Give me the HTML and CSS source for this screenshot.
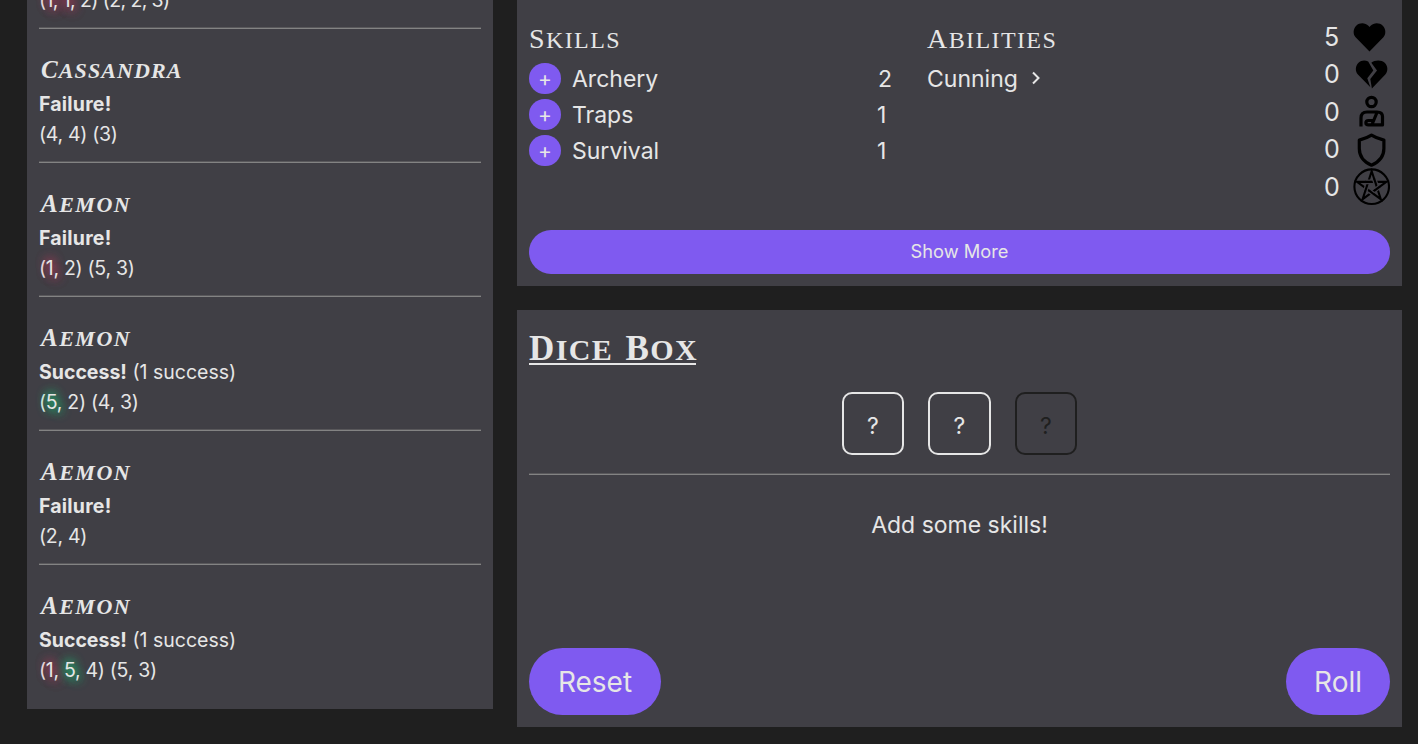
FILE: index.html
```html
<!DOCTYPE html>
<html lang="en">
<head>
<meta charset="utf-8">
<title>Dice Box</title>
<link rel="stylesheet" href="styles.css">
</head>
<body>
<main class="layout">
  <section class="panel log">
    <article class="entry">
      <p class="rolls tight">(<span class="bad">1,</span> <span class="bad">1,</span> 2) (2, 2, 3)</p>
    </article>
    <hr>
    <article class="entry">
      <h3 class="name name-long">Cassandra</h3>
      <p class="result"><b class="fail">Failure!</b></p>
      <p class="rolls">(4, 4) (3)</p>
    </article>
    <hr>
    <article class="entry">
      <h3 class="name">Aemon</h3>
      <p class="result"><b class="fail">Failure!</b></p>
      <p class="rolls">(<span class="bad">1,</span> 2) (5, 3)</p>
    </article>
    <hr>
    <article class="entry">
      <h3 class="name">Aemon</h3>
      <p class="result"><b>Success!</b> (1 success)</p>
      <p class="rolls">(<span class="good">5,</span> 2) (4, 3)</p>
    </article>
    <hr>
    <article class="entry">
      <h3 class="name">Aemon</h3>
      <p class="result"><b class="fail">Failure!</b></p>
      <p class="rolls">(2, 4)</p>
    </article>
    <hr>
    <article class="entry">
      <h3 class="name">Aemon</h3>
      <p class="result"><b>Success!</b> (1 success)</p>
      <p class="rolls">(<span class="bad">1,</span> <span class="good">5,</span> 4) (5, 3)</p>
    </article>
  </section>

  <div class="column">
    <section class="panel sheet">
      <div class="sheet-grid">
        <div class="skills">
          <h2 class="heading">Skills</h2>
          <ul class="list">
            <li class="skill"><button class="add">+</button><span class="label">Archery</span><span class="value">2</span></li>
            <li class="skill"><button class="add">+</button><span class="label">Traps</span><span class="value one">1</span></li>
            <li class="skill"><button class="add">+</button><span class="label">Survival</span><span class="value one">1</span></li>
          </ul>
        </div>
        <div class="abilities">
          <h2 class="heading">Abilities</h2>
          <div class="ability"><span class="label">Cunning</span>
            <svg class="chevron" viewBox="0 0 10 14"><path d="M2 1.500 7.500 7 2 12.500"/></svg>
          </div>
        </div>
        <ul class="stats">
          <li class="stat"><span>5</span>
            <svg class="icon" viewBox="0 0 37.500 37.500"><path d="M18.500 33.500 4.600 19.300C1.800 16.300 2 10.700 5.200 7.700 8.700 4.400 14.200 4.500 17.400 7.800L18.500 8.900 19.600 7.800C22.800 4.500 28.300 4.400 31.800 7.700 35 10.700 35.200 16.300 32.400 19.300Z"/></svg></li>
          <li class="stat"><span>0</span>
            <svg class="icon" viewBox="0 0 37.500 37.500"><path d="M15.200 5.600C12 3.700 8.200 4.200 5.500 6.700 2.200 9.800 2 15.300 4.900 18.500L17.400 31.200 14.300 22.200 20.300 14.600Z"/><path d="M18.300 6.800C21.700 3.700 28.500 3.600 31.700 6.700 35 9.800 35.300 15.300 32.300 18.500L18.900 32.600 17.300 23 24 14.600Z"/></svg></li>
          <li class="stat"><span>0</span>
            <svg class="icon line" viewBox="0 0 37.500 37.500"><circle cx="18.500" cy="9" r="4.700"/><path d="M8 33.500V25C8 21 10.500 19 14 19H24C28 19 29.500 20.800 29.500 23.500V31.900H15.500C12 31.900 12 27.500 15.500 27.500H21M24 19.500 19.200 31"/></svg></li>
          <li class="stat"><span>0</span>
            <svg class="icon line" viewBox="0 0 37.500 37.500"><path d="M18.500 4.200C14.500 6.800 10.500 8.100 6.300 9.100V17.500C6.300 25.500 11 31 18.500 34.200 26 31 30.900 25.500 30.900 17.500V9.100C26.500 8.100 22.500 6.800 18.500 4.200Z"/></svg></li>
          <li class="stat"><span>0</span>
            <svg class="icon star" viewBox="0 0 37.500 37.500"><circle cx="18.700" cy="18.700" r="17.300"/><path d="M18.700 3.200 27.800 31.200 4 13.900H33.400L9.600 31.200Z"/><path class="gap" d="M21.400 11.500 23 16.300M26.300 19 22.300 22M16.700 23.100 20.700 26.100M13.900 18.100 12.300 22.900M12.700 13.900H17.700"/><path d="M21.200 10.900 23.200 16.900M26.800 18.600 21.800 22.400M16.200 22.700 21.200 26.500M14.100 17.500 12.100 23.500M12.100 13.900H18.300"/></svg></li>
        </ul>
      </div>
      <button class="btn more">Show More</button>
    </section>

    <section class="panel dicebox">
      <h1 class="title"><span>Dice</span> <span>Box</span></h1>
      <div class="dice">
        <div class="die">?</div>
        <div class="die">?</div>
        <div class="die off">?</div>
      </div>
      <hr>
      <p class="hint">Add some skills!</p>
      <div class="actions">
        <button class="btn big reset">Reset</button>
        <button class="btn big roll">Roll</button>
      </div>
    </section>
  </div>
</main>
</body>
</html>
```
FILE: styles.css
```css
* { box-sizing: border-box; }
body {
  margin: 0;
  height: 744px;
  overflow: hidden;
  background: #1f1f1f;
  color: #e6e6e6;
  font-family: Inter, "Liberation Sans", sans-serif;
  font-size: 23px;
}
h1, h2, h3, p, ul { margin: 0; padding: 0; }
ul { list-style: none; }
button { border: 0; padding: 0; color: inherit; font: inherit; background: #7f5af0; }
hr {
  width: 100%;
  margin: 0;
  border: solid;
  border-width: 1px 0;
  border-color: #59585b #838383 #838383;
  flex: none;
}

.layout { display: flex; align-items: flex-start; gap: 24px; padding: 0 16px 0 27px; }
.panel { background: #403f45; }

.log {
  display: flex;
  flex-direction: column;
  justify-content: flex-end;
  width: 466px;
  height: 709px;
  padding: 0 12px 24px;
  overflow: hidden;
  font-size: 19.5px;
}
.log hr { margin: 12px 0 24px; }
.entry { flex: none; white-space: nowrap; }
.name {
  height: 36px;
  padding-left: 2px;
  font: italic bold 31px/30px "Liberation Serif", serif;
  font-variant: small-caps;
  letter-spacing: 1.5px;
}
.name::first-letter { font-size: 25px; }
.name-long { letter-spacing: 1.1px; }
.result, .rolls { height: 30px; line-height: 30px; }
.fail { letter-spacing: 0.2px; }
.rolls { letter-spacing: -0.3px; }
.tight { letter-spacing: -0.6px; }
.bad { text-shadow: 0 0 12px #ff3868, 0 0 12px #ff3868; }
.good { text-shadow: 0 0 11px #10e080, 0 0 11px #10e080; }

.column { display: flex; flex-direction: column; gap: 24px; width: 885px; }
.sheet { height: 286px; padding: 18px 12px 12px; display: flex; flex-direction: column; justify-content: space-between; }
.sheet-grid { display: flex; }
.skills { width: 374px; margin-right: 24px; }
.abilities { flex: 1; }
.heading {
  height: 42px;
  font: 34px/37px "Liberation Serif", serif;
  font-variant: small-caps;
  letter-spacing: 1.4px;
}
.heading::first-letter { font-size: 28px; }
.skill { display: flex; align-items: center; height: 36px; }
.add { width: 32px; height: 31px; border-radius: 16px; font-size: 21px; line-height: 31px; margin-right: 11px; }
.label { flex: none; padding-top: 2px; }
.value { margin-left: auto; width: 25px; padding-top: 2px; }
.one { width: 26px; }
.ability { display: flex; align-items: center; height: 36px; gap: 13px; }
.chevron { width: 10px; height: 14px; fill: none; stroke: #e6e6e6; stroke-width: 2; }
.stats { width: 66px; }
.stat { display: flex; justify-content: space-between; align-items: center; height: 37.5px; font-size: 25px; line-height: 36px; }
.stat:first-child .icon { margin-right: 2px; }
.icon { width: 37.5px; height: 37.5px; }
.line { fill: none; stroke: #000; stroke-width: 3.2; stroke-linejoin: round; }
.star { fill: none; stroke: #000; stroke-width: 2.1; }
.star .gap { stroke: #403f45; stroke-width: 4.6; }
.more { width: 100%; height: 44px; padding-bottom: 2px; border-radius: 22px; font-size: 18.3px; }

.dicebox { display: flex; flex-direction: column; height: 417px; padding: 12px; }
.title {
  align-self: flex-start;
  width: 167px;
  height: 43px;
  border-bottom: 2px solid #e6e6e6;
  font: bold 43px/47px "Liberation Serif", serif;
  font-variant: small-caps;
  letter-spacing: 1.4px;
  white-space: nowrap;
}
.title span { display: inline-block; }
.title span::first-letter { font-size: 35px; }
.dice { display: flex; justify-content: center; gap: 24px; margin: 27px 0 18px; }
.die {
  width: 62.5px;
  height: 63px;
  border: 2px solid #e6e6e6;
  border-radius: 10px;
  text-align: center;
  line-height: 64px;
}
.off { color: #1f1f1f; border-color: #1f1f1f; }
.hint { margin-top: 32px; text-align: center; line-height: 36px; }
.actions { display: flex; justify-content: space-between; margin-top: auto; }
.big { height: 67px; border-radius: 33.5px; font-size: 28px; }
.reset { width: 132px; }
.roll { width: 104px; }
```
